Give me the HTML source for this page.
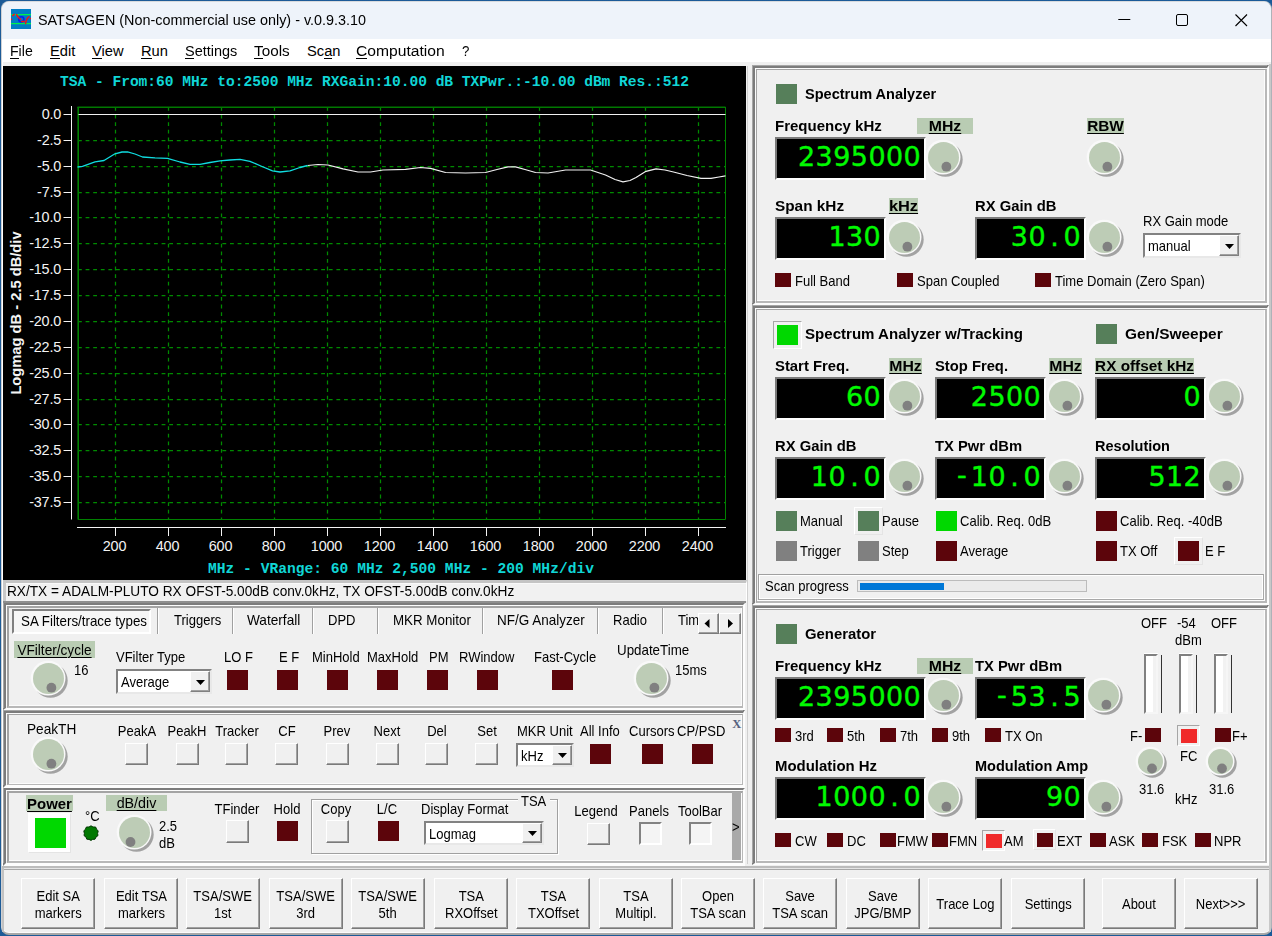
<!DOCTYPE html>
<html lang="en"><head><meta charset="utf-8"><title>SATSAGEN</title>
<style>
*{box-sizing:content-box;margin:0;padding:0}
html,body{width:1272px;height:936px;overflow:hidden;background:#1d5b97}
body{position:relative;font-family:"Liberation Sans",sans-serif;color:#000;font-size:13px}
.r,.t,.pnl,.disp,.lfr,.cmb,.btn,.stat,.sp,.pb,.mtr,.tabsel,.grp,.cb,.bbar,.desk,.win,.titlebar{position:absolute}
.t{white-space:nowrap;line-height:1;filter:grayscale(1)}
.ttl,.mn,.bx{filter:none}
.b{font-weight:bold}
.u{text-decoration:underline;text-underline-offset:1.5px;text-decoration-thickness:1px}
.mn u{text-underline-offset:2px;text-decoration-thickness:1px}
.desk{left:0;top:0;width:1272px;height:936px;background:linear-gradient(90deg,#1d5b97,#1a5a98)}
.win{left:1px;top:1px;width:1269px;height:931px;border:1px solid #d0d2d6;border-width:1px 1px 2px 1px;border-color:#d8dadd #aeb2b8 #a8a8a8 #cfd1d4;border-radius:8px;background:#f0f0f0;box-shadow:inset 1px 0 0 #fff,inset 0 -1px 0 #fbfbfb}
.titlebar{left:2px;top:2px;width:1269px;height:37px;background:#eef3fa;border-radius:7px 7px 0 0}
.pnl{border:2px solid;border-color:#868686 #fff #fff #868686}
.pnl i,.pnl b{position:absolute;left:0;top:0;right:2px;bottom:2px;border:1px solid #fff}
.pnl b{left:1px;top:1px;right:0;bottom:0;border-width:1px 2px 2px 1px;border-color:#a6a6a6 #b6b6b6 #b6b6b6 #a6a6a6}
.disp{background:#000;border:2px solid;border-color:#7a7a7a #fff #fff #7a7a7a;overflow:hidden}
.disp svg{position:absolute;left:0;top:0}
.dg{font:25.7px "DejaVu Sans","Liberation Sans",sans-serif;fill:#00fa00;stroke:#00fa00;stroke-width:0.35px}
.lfr{border:1px solid;border-color:#fff #e4e4e4 #e4e4e4 #fff}
.lfr.sunk{border-color:#a6a6a6 #fff #fff #a6a6a6}
.cmb{background:#fff;border:2px solid;border-color:#828282 #e8e8e8 #e8e8e8 #828282;}
.cmb span{filter:grayscale(1);position:absolute;left:3px;top:2px;font-size:14.5px;line-height:18px;white-space:nowrap;transform:scaleX(.897);transform-origin:0 0}
.cbtn{position:absolute;right:0;top:0;bottom:0;width:18px;background:#f0f0f0;border:1px solid;border-color:#fff #808080 #808080 #fff;box-shadow:inset -1px -1px 0 #a0a0a0}
.cbtn svg{position:absolute;left:4.5px;top:50%;margin-top:-2px}
.btn{background:#f0f0f0;border:1px solid;border-color:#fff #7a7a7a #7a7a7a #fff;box-shadow:inset -1px -1px 0 #a0a0a0;display:flex;align-items:center;justify-content:center;text-align:center;line-height:17px}
.btn span{display:block;filter:grayscale(1);transform:scaleX(.897);white-space:nowrap;position:relative;top:1.2px}
.stat{background:#f1f1f1;border-style:solid;border-width:3px 1px 0 3px;border-color:#c4c4c4 #fff #fff #c8c8c8;box-shadow:inset 0 1px 0 #f8f8f8}
.sp{border:1px solid;border-color:#a0a0a0 #a8a8a8 #a8a8a8 #a0a0a0;box-shadow:inset 1px 1px 0 #fff,inset -1px -1px 0 #fff}
.pb{background:#ebebeb;border:1px solid #bcbcbc}
.pb div{position:absolute;left:1.5px;top:2px;height:7px;background:#0078d7}
.mtr{background:linear-gradient(90deg,#fff 0,#fff 75%,#f2f2f2 75%);border:2px solid;border-color:#808080 #f6f6f6 #f6f6f6 #808080;box-shadow:0 -1px 0 #fff}
.tabsel{background:#f6f6f6;border:2px solid;border-color:#808080 #fff #fff #808080}
.grp{border:1px solid #a0a0a0;box-shadow:1px 1px 0 #fff, inset 1px 1px 0 #fff}
.cb{background:#f4f4f4;border:2px solid;border-color:#828282 #fff #fff #828282}
.bbar{border:1px solid;border-color:#a0a0a0 #fff #fff #a0a0a0;box-shadow:inset 1px 1px 0 #fff}
.ax{font:14.4px "Liberation Sans",sans-serif;fill:#f4f4f4;letter-spacing:-0.15px}
.ayt{font:bold 14.7px "Liberation Sans",sans-serif;fill:#f4f4f4}
.ct{font:bold 14.6px "Liberation Mono",monospace;fill:#10d6d6}
.bx{font-family:"Liberation Serif",serif;font-weight:bold;color:#56627e}
.ttl{letter-spacing:0}
</style></head>
<body>
<div class="desk"></div>
<div class="win"></div>
<div class="titlebar"></div>
<svg class="r" style="left:11px;top:9px" width="20" height="20" viewBox="0 0 20 20"><rect width="20" height="20" fill="#007dc5"/><rect y="5" width="20" height="1.2" fill="#00f24a"/><rect y="14" width="20" height="1.2" fill="#00f24a"/><circle cx="10.3" cy="10.3" r="2.6" fill="none" stroke="#0a1ef0" stroke-width="1.6"/><path d="M0.4 10.2v.3M1.8 6.6l1.4-1.2M5.6 5.6L7 8l2.6 2.2M10.6 12.6h2.6M14.6 14.4l.6-2.6 1.4-2.8 1.4-1.2M19.4 9.4v.2" fill="none" stroke="#f01616" stroke-width="1.5" stroke-linecap="round"/></svg>
<div class="t ttl" style="left:38px;top:12.30px;font-size:15px;transform:scaleX(0.959);transform-origin:0 0;">SATSAGEN (Non-commercial use only) - v.0.9.3.10</div>
<svg class="r" style="left:1100px;top:1px" width="170" height="38" viewBox="0 0 170 38"><path d="M18.3 18.5h12" stroke="#000" stroke-width="1" fill="none"/><rect x="76.5" y="13.5" width="11" height="11" rx="1.5" fill="none" stroke="#000" stroke-width="1"/><path d="M135.5 13.5l11.5 11.5M147 13.5l-11.5 11.5" stroke="#000" stroke-width="1.1" fill="none"/></svg>
<div class="r" style="left:2px;top:39px;width:1269px;height:23px;background:#ffffff;"></div>
<div class="r" style="left:1269px;top:64px;width:2px;height:868px;background:#c8c8c8;"></div>
<div class="t mn" style="left:10px;top:43.56px;font-size:14.7px;transform:scaleX(0.96);transform-origin:0 0;">File</div>
<div class="r" style="left:10.0px;top:58px;width:8.6px;height:1px;background:#000;"></div>
<div class="t mn" style="left:50px;top:43.56px;font-size:14.7px;">Edit</div>
<div class="r" style="left:50px;top:58px;width:9.8px;height:1px;background:#000;"></div>
<div class="t mn" style="left:92px;top:43.56px;font-size:14.7px;">View</div>
<div class="r" style="left:92px;top:58px;width:9.8px;height:1px;background:#000;"></div>
<div class="t mn" style="left:141px;top:43.56px;font-size:14.7px;">Run</div>
<div class="r" style="left:141px;top:58px;width:10.6px;height:1px;background:#000;"></div>
<div class="t mn" style="left:184.5px;top:43.56px;font-size:14.7px;transform:scaleX(0.985);transform-origin:0 0;">Settings</div>
<div class="r" style="left:184.5px;top:58px;width:9.6px;height:1px;background:#000;"></div>
<div class="t mn" style="left:254px;top:43.56px;font-size:14.7px;transform:scaleX(1.04);transform-origin:0 0;">Tools</div>
<div class="r" style="left:254.0px;top:58px;width:9.3px;height:1px;background:#000;"></div>
<div class="t mn" style="left:307px;top:43.56px;font-size:14.7px;">Scan</div>
<div class="r" style="left:324.1px;top:58px;width:8.2px;height:1px;background:#000;"></div>
<div class="t mn" style="left:356px;top:43.56px;font-size:14.7px;transform:scaleX(1.065);transform-origin:0 0;">Computation</div>
<div class="r" style="left:356.0px;top:58px;width:11.3px;height:1px;background:#000;"></div>
<div class="t mn" style="left:462.3px;top:43.56px;font-size:14.7px;transform:scaleX(0.9);transform-origin:0 0;">?</div>
<svg class="r" style="left:3px;top:66px" width="743" height="514" viewBox="3 66 743 514"><rect x="3" y="66" width="743" height="514" fill="#000"/><path d="M115.5 107V519.5" stroke="#008a00" stroke-width="1.25" stroke-dasharray="3.8 3.8" fill="none"/><path d="M168.5 107V519.5" stroke="#008a00" stroke-width="1.25" stroke-dasharray="3.8 3.8" fill="none"/><path d="M221.5 107V519.5" stroke="#008a00" stroke-width="1.25" stroke-dasharray="3.8 3.8" fill="none"/><path d="M274.5 107V519.5" stroke="#008a00" stroke-width="1.25" stroke-dasharray="3.8 3.8" fill="none"/><path d="M327.5 107V519.5" stroke="#008a00" stroke-width="1.25" stroke-dasharray="3.8 3.8" fill="none"/><path d="M380.5 107V519.5" stroke="#008a00" stroke-width="1.25" stroke-dasharray="3.8 3.8" fill="none"/><path d="M433.5 107V519.5" stroke="#008a00" stroke-width="1.25" stroke-dasharray="3.8 3.8" fill="none"/><path d="M486.5 107V519.5" stroke="#008a00" stroke-width="1.25" stroke-dasharray="3.8 3.8" fill="none"/><path d="M539.5 107V519.5" stroke="#008a00" stroke-width="1.25" stroke-dasharray="3.8 3.8" fill="none"/><path d="M592.5 107V519.5" stroke="#008a00" stroke-width="1.25" stroke-dasharray="3.8 3.8" fill="none"/><path d="M645.5 107V519.5" stroke="#008a00" stroke-width="1.25" stroke-dasharray="3.8 3.8" fill="none"/><path d="M698.5 107V519.5" stroke="#008a00" stroke-width="1.25" stroke-dasharray="3.8 3.8" fill="none"/><path d="M78 140.5H725.5" stroke="#008a00" stroke-width="1.25" stroke-dasharray="3.8 3.8" fill="none"/><path d="M78 166.5H725.5" stroke="#008a00" stroke-width="1.25" stroke-dasharray="3.8 3.8" fill="none"/><path d="M78 192.5H725.5" stroke="#008a00" stroke-width="1.25" stroke-dasharray="3.8 3.8" fill="none"/><path d="M78 217.5H725.5" stroke="#008a00" stroke-width="1.25" stroke-dasharray="3.8 3.8" fill="none"/><path d="M78 243.5H725.5" stroke="#008a00" stroke-width="1.25" stroke-dasharray="3.8 3.8" fill="none"/><path d="M78 269.5H725.5" stroke="#008a00" stroke-width="1.25" stroke-dasharray="3.8 3.8" fill="none"/><path d="M78 295.5H725.5" stroke="#008a00" stroke-width="1.25" stroke-dasharray="3.8 3.8" fill="none"/><path d="M78 321.5H725.5" stroke="#008a00" stroke-width="1.25" stroke-dasharray="3.8 3.8" fill="none"/><path d="M78 347.5H725.5" stroke="#008a00" stroke-width="1.25" stroke-dasharray="3.8 3.8" fill="none"/><path d="M78 373.5H725.5" stroke="#008a00" stroke-width="1.25" stroke-dasharray="3.8 3.8" fill="none"/><path d="M78 399.5H725.5" stroke="#008a00" stroke-width="1.25" stroke-dasharray="3.8 3.8" fill="none"/><path d="M78 424.5H725.5" stroke="#008a00" stroke-width="1.25" stroke-dasharray="3.8 3.8" fill="none"/><path d="M78 450.5H725.5" stroke="#008a00" stroke-width="1.25" stroke-dasharray="3.8 3.8" fill="none"/><path d="M78 476.5H725.5" stroke="#008a00" stroke-width="1.25" stroke-dasharray="3.8 3.8" fill="none"/><path d="M78 502.5H725.5" stroke="#008a00" stroke-width="1.25" stroke-dasharray="3.8 3.8" fill="none"/><path d="M78.2 519.5V107" fill="none" stroke="#008000" stroke-width="1.6"/><path d="M77.4 107.2H725.5" fill="none" stroke="#007800" stroke-width="1.6"/><path d="M725.5 107V519.5H78" fill="none" stroke="#008000" stroke-width="1"/><path d="M78.5 114.5H725.5" stroke="#f0f0f0" stroke-width="1.2" fill="none"/><path d="M71.5 106V519.5" stroke="#f4f4f4" stroke-width="1" fill="none"/><path d="M63.5 114.5H72" stroke="#f4f4f4" stroke-width="1" fill="none"/><text x="61.2" y="119.1" text-anchor="end" class="ax">0.0</text><path d="M63.5 140.5H72" stroke="#f4f4f4" stroke-width="1" fill="none"/><text x="61.2" y="145.1" text-anchor="end" class="ax">-2.5</text><path d="M63.5 166.5H72" stroke="#f4f4f4" stroke-width="1" fill="none"/><text x="61.2" y="171.1" text-anchor="end" class="ax">-5.0</text><path d="M63.5 192.5H72" stroke="#f4f4f4" stroke-width="1" fill="none"/><text x="61.2" y="197.1" text-anchor="end" class="ax">-7.5</text><path d="M63.5 217.5H72" stroke="#f4f4f4" stroke-width="1" fill="none"/><text x="61.2" y="222.1" text-anchor="end" class="ax">-10.0</text><path d="M63.5 243.5H72" stroke="#f4f4f4" stroke-width="1" fill="none"/><text x="61.2" y="248.1" text-anchor="end" class="ax">-12.5</text><path d="M63.5 269.5H72" stroke="#f4f4f4" stroke-width="1" fill="none"/><text x="61.2" y="274.1" text-anchor="end" class="ax">-15.0</text><path d="M63.5 295.5H72" stroke="#f4f4f4" stroke-width="1" fill="none"/><text x="61.2" y="300.1" text-anchor="end" class="ax">-17.5</text><path d="M63.5 321.5H72" stroke="#f4f4f4" stroke-width="1" fill="none"/><text x="61.2" y="326.1" text-anchor="end" class="ax">-20.0</text><path d="M63.5 347.5H72" stroke="#f4f4f4" stroke-width="1" fill="none"/><text x="61.2" y="352.1" text-anchor="end" class="ax">-22.5</text><path d="M63.5 373.5H72" stroke="#f4f4f4" stroke-width="1" fill="none"/><text x="61.2" y="378.1" text-anchor="end" class="ax">-25.0</text><path d="M63.5 399.5H72" stroke="#f4f4f4" stroke-width="1" fill="none"/><text x="61.2" y="404.1" text-anchor="end" class="ax">-27.5</text><path d="M63.5 424.5H72" stroke="#f4f4f4" stroke-width="1" fill="none"/><text x="61.2" y="429.1" text-anchor="end" class="ax">-30.0</text><path d="M63.5 450.5H72" stroke="#f4f4f4" stroke-width="1" fill="none"/><text x="61.2" y="455.1" text-anchor="end" class="ax">-32.5</text><path d="M63.5 476.5H72" stroke="#f4f4f4" stroke-width="1" fill="none"/><text x="61.2" y="481.1" text-anchor="end" class="ax">-35.0</text><path d="M63.5 502.5H72" stroke="#f4f4f4" stroke-width="1" fill="none"/><text x="61.2" y="507.1" text-anchor="end" class="ax">-37.5</text><path d="M77 527.5H726" stroke="#f4f4f4" stroke-width="1" fill="none"/><path d="M115.5 527V536" stroke="#f4f4f4" stroke-width="1" fill="none"/><text x="114.5" y="551" text-anchor="middle" class="ax">200</text><path d="M168.5 527V536" stroke="#f4f4f4" stroke-width="1" fill="none"/><text x="167.5" y="551" text-anchor="middle" class="ax">400</text><path d="M221.5 527V536" stroke="#f4f4f4" stroke-width="1" fill="none"/><text x="220.5" y="551" text-anchor="middle" class="ax">600</text><path d="M274.5 527V536" stroke="#f4f4f4" stroke-width="1" fill="none"/><text x="273.5" y="551" text-anchor="middle" class="ax">800</text><path d="M327.5 527V536" stroke="#f4f4f4" stroke-width="1" fill="none"/><text x="326.5" y="551" text-anchor="middle" class="ax">1000</text><path d="M380.5 527V536" stroke="#f4f4f4" stroke-width="1" fill="none"/><text x="379.5" y="551" text-anchor="middle" class="ax">1200</text><path d="M433.5 527V536" stroke="#f4f4f4" stroke-width="1" fill="none"/><text x="432.5" y="551" text-anchor="middle" class="ax">1400</text><path d="M486.5 527V536" stroke="#f4f4f4" stroke-width="1" fill="none"/><text x="485.5" y="551" text-anchor="middle" class="ax">1600</text><path d="M539.5 527V536" stroke="#f4f4f4" stroke-width="1" fill="none"/><text x="538.5" y="551" text-anchor="middle" class="ax">1800</text><path d="M592.5 527V536" stroke="#f4f4f4" stroke-width="1" fill="none"/><text x="591.5" y="551" text-anchor="middle" class="ax">2000</text><path d="M645.5 527V536" stroke="#f4f4f4" stroke-width="1" fill="none"/><text x="644.5" y="551" text-anchor="middle" class="ax">2200</text><path d="M698.5 527V536" stroke="#f4f4f4" stroke-width="1" fill="none"/><text x="697.5" y="551" text-anchor="middle" class="ax">2400</text><text transform="translate(20.5 313) rotate(-90)" text-anchor="middle" class="ayt">Logmag dB - 2.5 dB/div</text><text x="60" y="86.1" class="ct" textLength="629">TSA - From:60 MHz to:2500 MHz RXGain:10.00 dB TXPwr.:-10.00 dBm Res.:512</text><text x="208" y="572.5" class="ct" textLength="386">MHz - VRange: 60 MHz 2,500 MHz - 200 MHz/div</text><polyline points="307.5,165.5 318.0,164.5 328.0,165.0 343.0,168.8 358.0,172.0 370.5,172.0 383.0,170.0 405.5,169.3 420.5,167.5 430.5,168.3 445.5,172.5 465.5,173.0 485.5,172.5 497.0,169.5 508.0,166.8 515.5,166.8 525.0,169.5 535.5,172.5 548.0,173.0 565.5,170.0 590.5,170.0 605.5,175.0 615.0,179.5 623.0,181.8 630.0,180.5 636.0,177.5 646.0,171.3 656.0,168.8 665.0,170.0 673.5,172.0 687.0,175.5 701.0,178.3 711.0,178.3 719.0,177.0 725.5,175.8" fill="none" stroke="#f0f0f0" stroke-width="1.2" stroke-linejoin="round"/><polyline points="77.5,167.0 82.5,166.3 95.0,161.8 104.0,160.5 115.0,153.8 122.0,152.0 127.5,151.8 135.0,154.0 142.5,157.0 155.0,157.8 167.5,158.3 180.0,162.0 190.0,164.3 200.0,164.3 210.0,162.5 220.0,160.8 230.0,160.0 240.0,159.3 250.0,161.3 262.0,166.5 272.5,170.8 280.0,172.0 290.0,170.8 300.0,167.5 307.5,165.5" fill="none" stroke="#10dce0" stroke-width="1.3" stroke-linejoin="round"/></svg>
<div class="stat" style="left:3px;top:580px;width:740px;height:18px"></div>
<div class="t" style="left:6.6px;top:583.22px;font-size:15.1px;transform:scaleX(0.905);transform-origin:0 0;">RX/TX = ADALM-PLUTO RX OFST-5.00dB conv.0kHz, TX OFST-5.00dB conv.0kHz</div>
<div class="r" style="left:747px;top:66px;width:1px;height:798px;background:#d0d0d0;"></div>
<div class="r" style="left:752px;top:65px;width:512px;height:235px;border-style:solid;border-width:3px 2px 2px 3px;border-color:#7c7c7c #fdfdfd #fdfdfd #7c7c7c"></div>
<div class="r" style="left:752px;top:65px;width:1px;height:238px;background:#a6a6a6;"></div>
<div class="r" style="left:752px;top:65px;width:515px;height:1px;background:#a6a6a6;"></div>
<div class="r" style="left:755px;top:68px;width:508px;height:231px;border:1px solid #fcfcfc"></div>
<div class="r" style="left:756px;top:69px;width:508px;height:231px;border-style:solid;border-width:1px 2px 2px 1px;border-color:#a4a4a4 #b8b8b8 #b8b8b8 #a4a4a4"></div>
<div class="r" style="left:776px;top:84px;width:21px;height:20px;background:#567f5a;"></div>
<div class="t b" style="left:805px;top:87.23px;font-size:14.5px;transform:scaleX(1.003);transform-origin:0 0;">Spectrum Analyzer</div>
<div class="t b" style="left:775px;top:119.23px;font-size:14.5px;transform:scaleX(1.035);transform-origin:0 0;">Frequency kHz</div>
<div class="r" style="left:917px;top:118px;width:56px;height:16px;background:#b9ccb3;"></div>
<div class="t b u" style="left:917px;top:119.03px;font-size:14.5px;width:56px;text-align:center;transform:scaleX(1.09);transform-origin:50% 0;">MHz</div>
<div class="disp" style="left:775px;top:137px;width:147px;height:39px"><svg width="147" height="39" viewBox="0 0 147 39"><text class="dg" transform="scale(1.05 1)" text-anchor="middle" x="28.19 44.95 61.71 78.48 95.24 112.00 128.76" y="26.9 26.9 26.9 26.9 26.9 26.9 26.9">2395000</text></svg></div>
<svg class="r" style="left:925.0px;top:138.5px" width="40.0" height="40.0" viewBox="0 0 40.0 40.0"><circle cx="20.5" cy="20.5" r="17.2" fill="#a2a2a2"/><circle cx="18.1" cy="18.1" r="17.4" fill="#f9f9f9"/><circle cx="18.5" cy="18.5" r="15.5" fill="#bdccb6"/><circle cx="21.4" cy="27.7" r="4.9" fill="#808080"/></svg>
<div class="r" style="left:1087px;top:118px;width:37px;height:16px;background:#b9ccb3;"></div>
<div class="t b u" style="left:1087px;top:119.03px;font-size:14.5px;width:37px;text-align:center;transform:scaleX(1.06);transform-origin:50% 0;">RBW</div>
<svg class="r" style="left:1086.0px;top:138.5px" width="40.0" height="40.0" viewBox="0 0 40.0 40.0"><circle cx="20.5" cy="20.5" r="17.2" fill="#a2a2a2"/><circle cx="18.1" cy="18.1" r="17.4" fill="#f9f9f9"/><circle cx="18.5" cy="18.5" r="15.5" fill="#bdccb6"/><circle cx="21.4" cy="27.7" r="4.9" fill="#808080"/></svg>
<div class="t b" style="left:775px;top:199.23px;font-size:14.5px;transform:scaleX(1.058);transform-origin:0 0;">Span kHz</div>
<div class="r" style="left:889px;top:198px;width:29px;height:16px;background:#b9ccb3;"></div>
<div class="t b u" style="left:889px;top:199.03px;font-size:14.5px;width:29px;text-align:center;transform:scaleX(1.13);transform-origin:50% 0;">kHz</div>
<div class="disp" style="left:775px;top:217px;width:107px;height:39px"><svg width="107" height="39" viewBox="0 0 107 39"><text class="dg" transform="scale(1.05 1)" text-anchor="middle" x="57.14 73.90 90.67" y="26.9 26.9 26.9">130</text></svg></div>
<svg class="r" style="left:886.0px;top:218.5px" width="40.0" height="40.0" viewBox="0 0 40.0 40.0"><circle cx="20.5" cy="20.5" r="17.2" fill="#a2a2a2"/><circle cx="18.1" cy="18.1" r="17.4" fill="#f9f9f9"/><circle cx="18.5" cy="18.5" r="15.5" fill="#bdccb6"/><circle cx="21.4" cy="27.7" r="4.9" fill="#808080"/></svg>
<div class="t b" style="left:975px;top:199.23px;font-size:14.5px;transform:scaleX(1.021);transform-origin:0 0;">RX Gain dB</div>
<div class="disp" style="left:975px;top:217px;width:107px;height:39px"><svg width="107" height="39" viewBox="0 0 107 39"><text class="dg" transform="scale(1.05 1)" text-anchor="middle" x="40.38 57.14 73.90 90.67" y="26.9 26.9 26.9 26.9">30.0</text></svg></div>
<svg class="r" style="left:1086.0px;top:218.5px" width="40.0" height="40.0" viewBox="0 0 40.0 40.0"><circle cx="20.5" cy="20.5" r="17.2" fill="#a2a2a2"/><circle cx="18.1" cy="18.1" r="17.4" fill="#f9f9f9"/><circle cx="18.5" cy="18.5" r="15.5" fill="#bdccb6"/><circle cx="21.4" cy="27.7" r="4.9" fill="#808080"/></svg>
<div class="t" style="left:1143px;top:214.23px;font-size:14.5px;transform:scaleX(0.897);transform-origin:0 0;">RX Gain mode</div>
<div class="cmb" style="left:1143px;top:233px;width:94px;height:21px"><span>manual</span><div class="cbtn"><svg width="9" height="5" viewBox="0 0 9 5"><path d="M0 0h9L4.5 5z" fill="#000"/></svg></div></div>
<div class="r" style="left:775px;top:273px;width:16px;height:14px;background:#5c050b;"></div>
<div class="t" style="left:795px;top:274.23px;font-size:14.5px;transform:scaleX(0.897);transform-origin:0 0;">Full Band</div>
<div class="r" style="left:897px;top:273px;width:16px;height:14px;background:#5c050b;"></div>
<div class="t" style="left:917px;top:274.23px;font-size:14.5px;transform:scaleX(0.897);transform-origin:0 0;">Span Coupled</div>
<div class="r" style="left:1035px;top:273px;width:16px;height:14px;background:#5c050b;"></div>
<div class="t" style="left:1055px;top:274.23px;font-size:14.5px;transform:scaleX(0.897);transform-origin:0 0;">Time Domain (Zero Span)</div>
<div class="r" style="left:752px;top:305px;width:512px;height:295px;border-style:solid;border-width:3px 2px 2px 3px;border-color:#7c7c7c #fdfdfd #fdfdfd #7c7c7c"></div>
<div class="r" style="left:752px;top:305px;width:1px;height:298px;background:#a6a6a6;"></div>
<div class="r" style="left:752px;top:305px;width:515px;height:1px;background:#a6a6a6;"></div>
<div class="r" style="left:755px;top:308px;width:508px;height:291px;border:1px solid #fcfcfc"></div>
<div class="r" style="left:756px;top:309px;width:508px;height:291px;border-style:solid;border-width:1px 2px 2px 1px;border-color:#a4a4a4 #b8b8b8 #b8b8b8 #a4a4a4"></div>
<div class="lfr sunk" style="left:773px;top:321px;width:27px;height:26px"></div>
<div class="r" style="left:777px;top:325px;width:21px;height:20px;background:#00d800;"></div>
<div class="t b" style="left:805px;top:327.23px;font-size:14.5px;transform:scaleX(1.039);transform-origin:0 0;">Spectrum Analyzer w/Tracking</div>
<div class="r" style="left:1096px;top:324px;width:21px;height:20px;background:#567f5a;"></div>
<div class="t b" style="left:1125px;top:327.23px;font-size:14.5px;transform:scaleX(1.063);transform-origin:0 0;">Gen/Sweeper</div>
<div class="t b" style="left:775px;top:359.23px;font-size:14.5px;transform:scaleX(1.024);transform-origin:0 0;">Start Freq.</div>
<div class="r" style="left:889px;top:358px;width:33px;height:16px;background:#b9ccb3;"></div>
<div class="t b u" style="left:889px;top:359.03px;font-size:14.5px;width:33px;text-align:center;transform:scaleX(1.09);transform-origin:50% 0;">MHz</div>
<div class="disp" style="left:775px;top:377px;width:107px;height:39px"><svg width="107" height="39" viewBox="0 0 107 39"><text class="dg" transform="scale(1.05 1)" text-anchor="middle" x="73.90 90.67" y="26.9 26.9">60</text></svg></div>
<svg class="r" style="left:886.0px;top:378.1px" width="40.0" height="40.0" viewBox="0 0 40.0 40.0"><circle cx="20.5" cy="20.5" r="17.2" fill="#a2a2a2"/><circle cx="18.1" cy="18.1" r="17.4" fill="#f9f9f9"/><circle cx="18.5" cy="18.5" r="15.5" fill="#bdccb6"/><circle cx="21.4" cy="27.7" r="4.9" fill="#808080"/></svg>
<div class="t b" style="left:935px;top:359.23px;font-size:14.5px;transform:scaleX(1.018);transform-origin:0 0;">Stop Freq.</div>
<div class="r" style="left:1049px;top:358px;width:33px;height:16px;background:#b9ccb3;"></div>
<div class="t b u" style="left:1049px;top:359.03px;font-size:14.5px;width:33px;text-align:center;transform:scaleX(1.09);transform-origin:50% 0;">MHz</div>
<div class="disp" style="left:935px;top:377px;width:107px;height:39px"><svg width="107" height="39" viewBox="0 0 107 39"><text class="dg" transform="scale(1.05 1)" text-anchor="middle" x="40.38 57.14 73.90 90.67" y="26.9 26.9 26.9 26.9">2500</text></svg></div>
<svg class="r" style="left:1046.0px;top:378.1px" width="40.0" height="40.0" viewBox="0 0 40.0 40.0"><circle cx="20.5" cy="20.5" r="17.2" fill="#a2a2a2"/><circle cx="18.1" cy="18.1" r="17.4" fill="#f9f9f9"/><circle cx="18.5" cy="18.5" r="15.5" fill="#bdccb6"/><circle cx="21.4" cy="27.7" r="4.9" fill="#808080"/></svg>
<div class="disp" style="left:1095px;top:377px;width:107px;height:39px"><svg width="107" height="39" viewBox="0 0 107 39"><text class="dg" transform="scale(1.05 1)" text-anchor="middle" x="90.67" y="26.9">0</text></svg></div>
<svg class="r" style="left:1206.0px;top:378.1px" width="40.0" height="40.0" viewBox="0 0 40.0 40.0"><circle cx="20.5" cy="20.5" r="17.2" fill="#a2a2a2"/><circle cx="18.1" cy="18.1" r="17.4" fill="#f9f9f9"/><circle cx="18.5" cy="18.5" r="15.5" fill="#bdccb6"/><circle cx="21.4" cy="27.7" r="4.9" fill="#808080"/></svg>
<div class="r" style="left:1095px;top:358px;width:99px;height:16px;background:#b9ccb3;"></div>
<div class="t b u" style="left:1095px;top:359.03px;font-size:14.5px;width:99px;text-align:center;transform:scaleX(1.058);transform-origin:50% 0;">RX offset kHz</div>
<div class="t b" style="left:775px;top:439.23px;font-size:14.5px;transform:scaleX(1.021);transform-origin:0 0;">RX Gain dB</div>
<div class="disp" style="left:775px;top:457px;width:107px;height:39px"><svg width="107" height="39" viewBox="0 0 107 39"><text class="dg" transform="scale(1.05 1)" text-anchor="middle" x="40.38 57.14 73.90 90.67" y="26.9 26.9 26.9 26.9">10.0</text></svg></div>
<svg class="r" style="left:886.0px;top:458.3px" width="40.0" height="40.0" viewBox="0 0 40.0 40.0"><circle cx="20.5" cy="20.5" r="17.2" fill="#a2a2a2"/><circle cx="18.1" cy="18.1" r="17.4" fill="#f9f9f9"/><circle cx="18.5" cy="18.5" r="15.5" fill="#bdccb6"/><circle cx="21.4" cy="27.7" r="4.9" fill="#808080"/></svg>
<div class="t b" style="left:935px;top:439.23px;font-size:14.5px;transform:scaleX(1.019);transform-origin:0 0;">TX Pwr dBm</div>
<div class="disp" style="left:935px;top:457px;width:107px;height:39px"><svg width="107" height="39" viewBox="0 0 107 39"><text class="dg" transform="scale(1.05 1)" text-anchor="middle" x="23.62 40.38 57.14 73.90 90.67" y="25.2 26.9 26.9 26.9 26.9">-10.0</text></svg></div>
<svg class="r" style="left:1046.0px;top:458.3px" width="40.0" height="40.0" viewBox="0 0 40.0 40.0"><circle cx="20.5" cy="20.5" r="17.2" fill="#a2a2a2"/><circle cx="18.1" cy="18.1" r="17.4" fill="#f9f9f9"/><circle cx="18.5" cy="18.5" r="15.5" fill="#bdccb6"/><circle cx="21.4" cy="27.7" r="4.9" fill="#808080"/></svg>
<div class="t b" style="left:1095px;top:439.23px;font-size:14.5px;transform:scaleX(1.001);transform-origin:0 0;">Resolution</div>
<div class="disp" style="left:1095px;top:457px;width:107px;height:39px"><svg width="107" height="39" viewBox="0 0 107 39"><text class="dg" transform="scale(1.05 1)" text-anchor="middle" x="57.14 73.90 90.67" y="26.9 26.9 26.9">512</text></svg></div>
<svg class="r" style="left:1206.0px;top:458.3px" width="40.0" height="40.0" viewBox="0 0 40.0 40.0"><circle cx="20.5" cy="20.5" r="17.2" fill="#a2a2a2"/><circle cx="18.1" cy="18.1" r="17.4" fill="#f9f9f9"/><circle cx="18.5" cy="18.5" r="15.5" fill="#bdccb6"/><circle cx="21.4" cy="27.7" r="4.9" fill="#808080"/></svg>
<div class="r" style="left:776px;top:511px;width:21px;height:20px;background:#567f5a;"></div>
<div class="t" style="left:800px;top:514.23px;font-size:14.5px;transform:scaleX(0.897);transform-origin:0 0;">Manual</div>
<div class="lfr" style="left:854px;top:507px;width:27px;height:26px"></div>
<div class="r" style="left:858px;top:511px;width:21px;height:20px;background:#567f5a;"></div>
<div class="t" style="left:882px;top:514.23px;font-size:14.5px;transform:scaleX(0.897);transform-origin:0 0;">Pause</div>
<div class="r" style="left:936px;top:511px;width:21px;height:20px;background:#00d800;"></div>
<div class="t" style="left:960px;top:514.23px;font-size:14.5px;transform:scaleX(0.897);transform-origin:0 0;">Calib. Req. 0dB</div>
<div class="r" style="left:1096px;top:511px;width:21px;height:20px;background:#5c050b;"></div>
<div class="t" style="left:1120px;top:514.23px;font-size:14.5px;transform:scaleX(0.897);transform-origin:0 0;">Calib. Req. -40dB</div>
<div class="r" style="left:776px;top:541px;width:21px;height:20px;background:#808080;"></div>
<div class="t" style="left:800px;top:544.23px;font-size:14.5px;transform:scaleX(0.897);transform-origin:0 0;">Trigger</div>
<div class="r" style="left:858px;top:541px;width:21px;height:20px;background:#808080;"></div>
<div class="t" style="left:882px;top:544.23px;font-size:14.5px;transform:scaleX(0.897);transform-origin:0 0;">Step</div>
<div class="r" style="left:936px;top:541px;width:21px;height:20px;background:#5c050b;"></div>
<div class="t" style="left:960px;top:544.23px;font-size:14.5px;transform:scaleX(0.897);transform-origin:0 0;">Average</div>
<div class="r" style="left:1096px;top:541px;width:21px;height:20px;background:#5c050b;"></div>
<div class="t" style="left:1120px;top:544.23px;font-size:14.5px;transform:scaleX(0.897);transform-origin:0 0;">TX Off</div>
<div class="lfr" style="left:1174px;top:537px;width:27px;height:26px"></div>
<div class="r" style="left:1178px;top:541px;width:21px;height:20px;background:#5c050b;"></div>
<div class="t" style="left:1205px;top:544.23px;font-size:14.5px;transform:scaleX(0.897);transform-origin:0 0;">E F</div>
<div class="sp" style="left:758px;top:574px;width:504px;height:24px"></div>
<div class="t" style="left:765px;top:579.23px;font-size:14.5px;transform:scaleX(0.897);transform-origin:0 0;">Scan progress</div>
<div class="pb" style="left:857px;top:580px;width:228px;height:10px"><div style="width:84px"></div></div>
<div class="r" style="left:752px;top:605px;width:512px;height:255px;border-style:solid;border-width:3px 2px 2px 3px;border-color:#7c7c7c #fdfdfd #fdfdfd #7c7c7c"></div>
<div class="r" style="left:752px;top:605px;width:1px;height:258px;background:#a6a6a6;"></div>
<div class="r" style="left:752px;top:605px;width:515px;height:1px;background:#a6a6a6;"></div>
<div class="r" style="left:755px;top:608px;width:508px;height:251px;border:1px solid #fcfcfc"></div>
<div class="r" style="left:756px;top:609px;width:508px;height:251px;border-style:solid;border-width:1px 2px 2px 1px;border-color:#a4a4a4 #b8b8b8 #b8b8b8 #a4a4a4"></div>
<div class="r" style="left:776px;top:624px;width:21px;height:20px;background:#567f5a;"></div>
<div class="t b" style="left:805px;top:627.23px;font-size:14.5px;transform:scaleX(1.025);transform-origin:0 0;">Generator</div>
<div class="t b" style="left:775px;top:659.23px;font-size:14.5px;transform:scaleX(1.035);transform-origin:0 0;">Frequency kHz</div>
<div class="r" style="left:917px;top:658px;width:56px;height:16px;background:#b9ccb3;"></div>
<div class="t b u" style="left:917px;top:659.03px;font-size:14.5px;width:56px;text-align:center;transform:scaleX(1.09);transform-origin:50% 0;">MHz</div>
<div class="disp" style="left:775px;top:677px;width:147px;height:39px"><svg width="147" height="39" viewBox="0 0 147 39"><text class="dg" transform="scale(1.05 1)" text-anchor="middle" x="28.19 44.95 61.71 78.48 95.24 112.00 128.76" y="26.9 26.9 26.9 26.9 26.9 26.9 26.9">2395000</text></svg></div>
<svg class="r" style="left:925.0px;top:677.1px" width="40.0" height="40.0" viewBox="0 0 40.0 40.0"><circle cx="20.5" cy="20.5" r="17.2" fill="#a2a2a2"/><circle cx="18.1" cy="18.1" r="17.4" fill="#f9f9f9"/><circle cx="18.5" cy="18.5" r="15.5" fill="#bdccb6"/><circle cx="21.4" cy="27.7" r="4.9" fill="#808080"/></svg>
<div class="t b" style="left:975px;top:659.23px;font-size:14.5px;transform:scaleX(1.019);transform-origin:0 0;">TX Pwr dBm</div>
<div class="disp" style="left:975px;top:677px;width:107px;height:39px"><svg width="107" height="39" viewBox="0 0 107 39"><text class="dg" transform="scale(1.05 1)" text-anchor="middle" x="23.62 40.38 57.14 73.90 90.67" y="25.2 26.9 26.9 26.9 26.9">-53.5</text></svg></div>
<svg class="r" style="left:1085.0px;top:677.1px" width="40.0" height="40.0" viewBox="0 0 40.0 40.0"><circle cx="20.5" cy="20.5" r="17.2" fill="#a2a2a2"/><circle cx="18.1" cy="18.1" r="17.4" fill="#f9f9f9"/><circle cx="18.5" cy="18.5" r="15.5" fill="#bdccb6"/><circle cx="21.4" cy="27.7" r="4.9" fill="#808080"/></svg>
<div class="r" style="left:775px;top:728px;width:16px;height:14px;background:#5c050b;"></div>
<div class="t" style="left:795px;top:729.23px;font-size:14.5px;transform:scaleX(0.897);transform-origin:0 0;">3rd</div>
<div class="r" style="left:827px;top:728px;width:16px;height:14px;background:#5c050b;"></div>
<div class="t" style="left:847px;top:729.23px;font-size:14.5px;transform:scaleX(0.897);transform-origin:0 0;">5th</div>
<div class="r" style="left:880px;top:728px;width:16px;height:14px;background:#5c050b;"></div>
<div class="t" style="left:900px;top:729.23px;font-size:14.5px;transform:scaleX(0.897);transform-origin:0 0;">7th</div>
<div class="r" style="left:932px;top:728px;width:16px;height:14px;background:#5c050b;"></div>
<div class="t" style="left:952px;top:729.23px;font-size:14.5px;transform:scaleX(0.897);transform-origin:0 0;">9th</div>
<div class="r" style="left:985px;top:728px;width:16px;height:14px;background:#5c050b;"></div>
<div class="t" style="left:1005px;top:729.23px;font-size:14.5px;transform:scaleX(0.897);transform-origin:0 0;">TX On</div>
<div class="t b" style="left:775px;top:759.23px;font-size:14.5px;transform:scaleX(1.03);transform-origin:0 0;">Modulation Hz</div>
<div class="disp" style="left:775px;top:777px;width:147px;height:39px"><svg width="147" height="39" viewBox="0 0 147 39"><text class="dg" transform="scale(1.05 1)" text-anchor="middle" x="44.95 61.71 78.48 95.24 112.00 128.76" y="26.9 26.9 26.9 26.9 26.9 26.9">1000.0</text></svg></div>
<svg class="r" style="left:925.0px;top:778.5px" width="40.0" height="40.0" viewBox="0 0 40.0 40.0"><circle cx="20.5" cy="20.5" r="17.2" fill="#a2a2a2"/><circle cx="18.1" cy="18.1" r="17.4" fill="#f9f9f9"/><circle cx="18.5" cy="18.5" r="15.5" fill="#bdccb6"/><circle cx="21.4" cy="27.7" r="4.9" fill="#808080"/></svg>
<div class="t b" style="left:975px;top:759.23px;font-size:14.5px;">Modulation Amp</div>
<div class="disp" style="left:975px;top:777px;width:107px;height:39px"><svg width="107" height="39" viewBox="0 0 107 39"><text class="dg" transform="scale(1.05 1)" text-anchor="middle" x="73.90 90.67" y="26.9 26.9">90</text></svg></div>
<svg class="r" style="left:1085.0px;top:778.5px" width="40.0" height="40.0" viewBox="0 0 40.0 40.0"><circle cx="20.5" cy="20.5" r="17.2" fill="#a2a2a2"/><circle cx="18.1" cy="18.1" r="17.4" fill="#f9f9f9"/><circle cx="18.5" cy="18.5" r="15.5" fill="#bdccb6"/><circle cx="21.4" cy="27.7" r="4.9" fill="#808080"/></svg>
<div class="r" style="left:775px;top:833px;width:16px;height:14px;background:#5c050b;"></div>
<div class="t" style="left:795px;top:834.23px;font-size:14.5px;transform:scaleX(0.897);transform-origin:0 0;">CW</div>
<div class="r" style="left:827px;top:833px;width:16px;height:14px;background:#5c050b;"></div>
<div class="t" style="left:847px;top:834.23px;font-size:14.5px;transform:scaleX(0.897);transform-origin:0 0;">DC</div>
<div class="r" style="left:880px;top:833px;width:16px;height:14px;background:#5c050b;"></div>
<div class="t" style="left:897px;top:834.23px;font-size:14.5px;transform:scaleX(0.897);transform-origin:0 0;">FMW</div>
<div class="r" style="left:932px;top:833px;width:16px;height:14px;background:#5c050b;"></div>
<div class="t" style="left:949px;top:834.23px;font-size:14.5px;transform:scaleX(0.897);transform-origin:0 0;">FMN</div>
<div class="lfr" style="left:1033px;top:829px;width:21px;height:19px"></div>
<div class="r" style="left:1037px;top:833px;width:16px;height:14px;background:#5c050b;"></div>
<div class="t" style="left:1057px;top:834.23px;font-size:14.5px;transform:scaleX(0.897);transform-origin:0 0;">EXT</div>
<div class="r" style="left:1090px;top:833px;width:16px;height:14px;background:#5c050b;"></div>
<div class="t" style="left:1109px;top:834.23px;font-size:14.5px;transform:scaleX(0.897);transform-origin:0 0;">ASK</div>
<div class="r" style="left:1142px;top:833px;width:16px;height:14px;background:#5c050b;"></div>
<div class="t" style="left:1162px;top:834.23px;font-size:14.5px;transform:scaleX(0.897);transform-origin:0 0;">FSK</div>
<div class="r" style="left:1195px;top:833px;width:16px;height:14px;background:#5c050b;"></div>
<div class="t" style="left:1214px;top:834.23px;font-size:14.5px;transform:scaleX(0.897);transform-origin:0 0;">NPR</div>
<div class="lfr sunk" style="left:982px;top:830px;width:21px;height:19px"></div>
<div class="r" style="left:986px;top:834px;width:16px;height:14px;background:#f02a2a;"></div>
<div class="t" style="left:1004px;top:834.23px;font-size:14.5px;transform:scaleX(0.897);transform-origin:0 0;">AM</div>
<div class="t" style="left:1141px;top:616.23px;font-size:14.5px;transform:scaleX(0.897);transform-origin:0 0;">OFF</div>
<div class="t" style="left:1177px;top:616.23px;font-size:14.5px;transform:scaleX(0.897);transform-origin:0 0;">-54</div>
<div class="t" style="left:1211px;top:616.23px;font-size:14.5px;transform:scaleX(0.897);transform-origin:0 0;">OFF</div>
<div class="t" style="left:1175px;top:633.23px;font-size:14.5px;transform:scaleX(0.897);transform-origin:0 0;">dBm</div>
<div class="mtr" style="left:1144px;top:654px;width:10px;height:56px"></div>
<div class="r" style="left:1161px;top:655px;width:1.3px;height:58px;background:#333;"></div>
<div class="mtr" style="left:1179px;top:654px;width:10px;height:56px"></div>
<div class="r" style="left:1196px;top:655px;width:1.3px;height:58px;background:#333;"></div>
<div class="mtr" style="left:1214px;top:654px;width:10px;height:56px"></div>
<div class="r" style="left:1231px;top:655px;width:1.3px;height:58px;background:#333;"></div>
<div class="t" style="left:1130px;top:729.23px;font-size:14.5px;transform:scaleX(0.897);transform-origin:0 0;">F-</div>
<div class="r" style="left:1145px;top:728px;width:16px;height:14px;background:#5c050b;"></div>
<div class="lfr sunk" style="left:1177px;top:725px;width:21px;height:19px"></div>
<div class="r" style="left:1181px;top:729px;width:16px;height:14px;background:#f02a2a;"></div>
<div class="r" style="left:1215px;top:728px;width:16px;height:14px;background:#5c050b;"></div>
<div class="t" style="left:1232px;top:729.23px;font-size:14.5px;transform:scaleX(0.897);transform-origin:0 0;">F+</div>
<svg class="r" style="left:1134.5px;top:745.5px" width="34.0" height="34.0" viewBox="0 0 34.0 34.0"><circle cx="17.5" cy="17.5" r="14.2" fill="#a2a2a2"/><circle cx="15.1" cy="15.1" r="14.4" fill="#f9f9f9"/><circle cx="15.5" cy="15.5" r="12.5" fill="#bdccb6"/><circle cx="17.0" cy="22.5" r="4.9" fill="#808080"/></svg>
<svg class="r" style="left:1204.5px;top:745.5px" width="34.0" height="34.0" viewBox="0 0 34.0 34.0"><circle cx="17.5" cy="17.5" r="14.2" fill="#a2a2a2"/><circle cx="15.1" cy="15.1" r="14.4" fill="#f9f9f9"/><circle cx="15.5" cy="15.5" r="12.5" fill="#bdccb6"/><circle cx="17.0" cy="22.5" r="4.9" fill="#808080"/></svg>
<div class="t" style="left:1180px;top:749.23px;font-size:14.5px;transform:scaleX(0.897);transform-origin:0 0;">FC</div>
<div class="t" style="left:1139px;top:781.63px;font-size:14.5px;transform:scaleX(0.897);transform-origin:0 0;">31.6</div>
<div class="t" style="left:1209px;top:781.63px;font-size:14.5px;transform:scaleX(0.897);transform-origin:0 0;">31.6</div>
<div class="t" style="left:1175px;top:792.23px;font-size:14.5px;transform:scaleX(0.897);transform-origin:0 0;">kHz</div>
<div class="r" style="left:3px;top:601px;width:743px;height:2px;background:#8e8e8e;"></div>
<div class="r" style="left:3px;top:603px;width:737px;height:103px;border-style:solid;border-width:2px 2px 2px 3px;border-color:#7c7c7c #fdfdfd #fdfdfd #7c7c7c"></div>
<div class="r" style="left:3px;top:603px;width:1px;height:105px;background:#a6a6a6;"></div>
<div class="r" style="left:6px;top:605px;width:734px;height:99px;border:1px solid #fcfcfc"></div>
<div class="r" style="left:7px;top:606px;width:733px;height:98px;border-style:solid;border-width:2px 1px 2px 2px;border-color:#a4a4a4 #b8b8b8 #b8b8b8 #a4a4a4"></div>
<div class="tabsel" style="left:12px;top:609px;width:135px;height:21px"></div>
<div class="t" style="left:20.5px;top:614.23px;font-size:14.5px;transform:scaleX(0.92);transform-origin:0 0;">SA Filters/trace types</div>
<div class="t" style="left:173.5px;top:613.23px;font-size:14.5px;transform:scaleX(0.897);transform-origin:0 0;">Triggers</div>
<div class="t" style="left:247px;top:613.23px;font-size:14.5px;transform:scaleX(0.94);transform-origin:0 0;">Waterfall</div>
<div class="t" style="left:327.5px;top:613.23px;font-size:14.5px;transform:scaleX(0.897);transform-origin:0 0;">DPD</div>
<div class="t" style="left:392.5px;top:613.23px;font-size:14.5px;transform:scaleX(0.92);transform-origin:0 0;">MKR Monitor</div>
<div class="t" style="left:497px;top:613.23px;font-size:14.5px;transform:scaleX(0.93);transform-origin:0 0;">NF/G Analyzer</div>
<div class="t" style="left:612.5px;top:613.23px;font-size:14.5px;transform:scaleX(0.897);transform-origin:0 0;">Radio</div>
<div class="t" style="left:678px;top:613.23px;font-size:14.5px;transform:scaleX(0.897);transform-origin:0 0;">Tim</div>
<div class="r" style="left:157px;top:608px;width:1px;height:26px;background:#a0a0a0;"></div>
<div class="r" style="left:158px;top:608px;width:1px;height:26px;background:#ffffff;"></div>
<div class="r" style="left:232px;top:608px;width:1px;height:26px;background:#a0a0a0;"></div>
<div class="r" style="left:233px;top:608px;width:1px;height:26px;background:#ffffff;"></div>
<div class="r" style="left:312px;top:608px;width:1px;height:26px;background:#a0a0a0;"></div>
<div class="r" style="left:313px;top:608px;width:1px;height:26px;background:#ffffff;"></div>
<div class="r" style="left:377px;top:608px;width:1px;height:26px;background:#a0a0a0;"></div>
<div class="r" style="left:378px;top:608px;width:1px;height:26px;background:#ffffff;"></div>
<div class="r" style="left:482px;top:608px;width:1px;height:26px;background:#a0a0a0;"></div>
<div class="r" style="left:483px;top:608px;width:1px;height:26px;background:#ffffff;"></div>
<div class="r" style="left:597px;top:608px;width:1px;height:26px;background:#a0a0a0;"></div>
<div class="r" style="left:598px;top:608px;width:1px;height:26px;background:#ffffff;"></div>
<div class="r" style="left:662px;top:608px;width:1px;height:26px;background:#a0a0a0;"></div>
<div class="r" style="left:663px;top:608px;width:1px;height:26px;background:#ffffff;"></div>
<div class="btn" style="left:698px;top:613px;width:19px;height:19px;font-size:14.5px"></div>
<div class="btn" style="left:719px;top:613px;width:20px;height:19px;font-size:14.5px"></div>
<svg class="r" style="left:698px;top:613px" width="44" height="21" viewBox="0 0 44 21"><path d="M11.5 6v9l-5-4.5z" fill="#000"/><path d="M30 6v9l5-4.5z" fill="#000"/></svg>
<div class="r" style="left:14px;top:641px;width:81px;height:17px;background:#b9ccb3;"></div>
<div class="t u" style="left:14px;top:642.83px;font-size:14.5px;width:81px;text-align:center;transform:scaleX(0.94);transform-origin:50% 0;">VFilter/cycle</div>
<svg class="r" style="left:30.0px;top:660.0px" width="40.0" height="40.0" viewBox="0 0 40.0 40.0"><circle cx="20.5" cy="20.5" r="17.2" fill="#a2a2a2"/><circle cx="18.1" cy="18.1" r="17.4" fill="#f9f9f9"/><circle cx="18.5" cy="18.5" r="15.5" fill="#bdccb6"/><circle cx="21.4" cy="27.7" r="4.9" fill="#808080"/></svg>
<div class="t" style="left:74px;top:663.23px;font-size:14.5px;transform:scaleX(0.897);transform-origin:0 0;">16</div>
<div class="t" style="left:116px;top:650.23px;font-size:14.5px;transform:scaleX(0.897);transform-origin:0 0;">VFilter Type</div>
<div class="cmb" style="left:116px;top:669px;width:92px;height:21px"><span>Average</span><div class="cbtn"><svg width="9" height="5" viewBox="0 0 9 5"><path d="M0 0h9L4.5 5z" fill="#000"/></svg></div></div>
<div class="t" style="left:224.2px;top:650.23px;font-size:14.5px;transform:scaleX(0.897);transform-origin:0 0;">LO F</div>
<div class="r" style="left:227px;top:670px;width:21px;height:20px;background:#5c050b;"></div>
<div class="t" style="left:279.2px;top:650.23px;font-size:14.5px;transform:scaleX(0.897);transform-origin:0 0;">E F</div>
<div class="r" style="left:277px;top:670px;width:21px;height:20px;background:#5c050b;"></div>
<div class="t" style="left:311.7px;top:650.23px;font-size:14.5px;transform:scaleX(0.897);transform-origin:0 0;">MinHold</div>
<div class="r" style="left:327px;top:670px;width:21px;height:20px;background:#5c050b;"></div>
<div class="t" style="left:366.6px;top:650.23px;font-size:14.5px;transform:scaleX(0.897);transform-origin:0 0;">MaxHold</div>
<div class="r" style="left:377px;top:670px;width:21px;height:20px;background:#5c050b;"></div>
<div class="t" style="left:428.8px;top:650.23px;font-size:14.5px;transform:scaleX(0.897);transform-origin:0 0;">PM</div>
<div class="r" style="left:427px;top:670px;width:21px;height:20px;background:#5c050b;"></div>
<div class="t" style="left:458.9px;top:650.23px;font-size:14.5px;transform:scaleX(0.897);transform-origin:0 0;">RWindow</div>
<div class="r" style="left:477px;top:670px;width:21px;height:20px;background:#5c050b;"></div>
<div class="t" style="left:534.2px;top:650.23px;font-size:14.5px;transform:scaleX(0.897);transform-origin:0 0;">Fast-Cycle</div>
<div class="r" style="left:552px;top:670px;width:21px;height:20px;background:#5c050b;"></div>
<div class="t" style="left:616.5px;top:643.23px;font-size:14.5px;transform:scaleX(0.92);transform-origin:0 0;">UpdateTime</div>
<svg class="r" style="left:632.5px;top:660.0px" width="40.0" height="40.0" viewBox="0 0 40.0 40.0"><circle cx="20.5" cy="20.5" r="17.2" fill="#a2a2a2"/><circle cx="18.1" cy="18.1" r="17.4" fill="#f9f9f9"/><circle cx="18.5" cy="18.5" r="15.5" fill="#bdccb6"/><circle cx="21.4" cy="27.7" r="4.9" fill="#808080"/></svg>
<div class="t" style="left:675px;top:663.23px;font-size:14.5px;transform:scaleX(0.897);transform-origin:0 0;">15ms</div>
<div class="r" style="left:3px;top:710px;width:737px;height:72px;border-style:solid;border-width:3px 2px 3px 3px;border-color:#7c7c7c #fdfdfd #fdfdfd #7c7c7c"></div>
<div class="r" style="left:3px;top:710px;width:1px;height:75px;background:#a6a6a6;"></div>
<div class="r" style="left:3px;top:710px;width:740px;height:1px;background:#a6a6a6;"></div>
<div class="r" style="left:6px;top:713px;width:734px;height:69px;border:1px solid #fcfcfc"></div>
<div class="r" style="left:7px;top:714px;width:733px;height:69px;border-style:solid;border-width:1px 1px 1px 2px;border-color:#a4a4a4 #b8b8b8 #b8b8b8 #a4a4a4"></div>
<div class="t" style="left:26.5px;top:722.23px;font-size:14.5px;transform:scaleX(0.94);transform-origin:0 0;">PeakTH</div>
<svg class="r" style="left:30.0px;top:736.0px" width="40.0" height="40.0" viewBox="0 0 40.0 40.0"><circle cx="20.5" cy="20.5" r="17.2" fill="#a2a2a2"/><circle cx="18.1" cy="18.1" r="17.4" fill="#f9f9f9"/><circle cx="18.5" cy="18.5" r="15.5" fill="#bdccb6"/><circle cx="21.4" cy="27.7" r="4.9" fill="#808080"/></svg>
<div class="t" style="left:96.5px;top:724.23px;font-size:14.5px;width:80px;text-align:center;transform:scaleX(0.897);transform-origin:50% 0;">PeakA</div>
<div class="btn" style="left:125px;top:743px;width:21px;height:20px;font-size:14.5px"></div>
<div class="t" style="left:147px;top:724.23px;font-size:14.5px;width:80px;text-align:center;transform:scaleX(0.897);transform-origin:50% 0;">PeakH</div>
<div class="btn" style="left:176px;top:743px;width:21px;height:20px;font-size:14.5px"></div>
<div class="t" style="left:196.5px;top:724.23px;font-size:14.5px;width:80px;text-align:center;transform:scaleX(0.897);transform-origin:50% 0;">Tracker</div>
<div class="btn" style="left:225px;top:743px;width:21px;height:20px;font-size:14.5px"></div>
<div class="t" style="left:246.5px;top:724.23px;font-size:14.5px;width:80px;text-align:center;transform:scaleX(0.897);transform-origin:50% 0;">CF</div>
<div class="btn" style="left:275px;top:743px;width:21px;height:20px;font-size:14.5px"></div>
<div class="t" style="left:297px;top:724.23px;font-size:14.5px;width:80px;text-align:center;transform:scaleX(0.897);transform-origin:50% 0;">Prev</div>
<div class="btn" style="left:326px;top:743px;width:21px;height:20px;font-size:14.5px"></div>
<div class="t" style="left:347px;top:724.23px;font-size:14.5px;width:80px;text-align:center;transform:scaleX(0.897);transform-origin:50% 0;">Next</div>
<div class="btn" style="left:376px;top:743px;width:21px;height:20px;font-size:14.5px"></div>
<div class="t" style="left:396.5px;top:724.23px;font-size:14.5px;width:80px;text-align:center;transform:scaleX(0.897);transform-origin:50% 0;">Del</div>
<div class="btn" style="left:425px;top:743px;width:21px;height:20px;font-size:14.5px"></div>
<div class="t" style="left:446.5px;top:724.23px;font-size:14.5px;width:80px;text-align:center;transform:scaleX(0.897);transform-origin:50% 0;">Set</div>
<div class="btn" style="left:475px;top:743px;width:21px;height:20px;font-size:14.5px"></div>
<div class="t" style="left:516.5px;top:724.23px;font-size:14.5px;transform:scaleX(0.897);transform-origin:0 0;">MKR Unit</div>
<div class="cmb" style="left:516px;top:743px;width:54px;height:20px"><span>kHz</span><div class="cbtn"><svg width="9" height="5" viewBox="0 0 9 5"><path d="M0 0h9L4.5 5z" fill="#000"/></svg></div></div>
<div class="t" style="left:579.8px;top:724.23px;font-size:14.5px;transform:scaleX(0.897);transform-origin:0 0;">All Info</div>
<div class="r" style="left:590px;top:744px;width:21px;height:20px;background:#5c050b;"></div>
<div class="t" style="left:628.9px;top:724.23px;font-size:14.5px;transform:scaleX(0.897);transform-origin:0 0;">Cursors</div>
<div class="r" style="left:642px;top:744px;width:21px;height:20px;background:#5c050b;"></div>
<div class="t" style="left:676.6px;top:724.23px;font-size:14.5px;transform:scaleX(0.897);transform-origin:0 0;">CP/PSD</div>
<div class="r" style="left:692px;top:744px;width:21px;height:20px;background:#5c050b;"></div>
<div class="t bx" style="left:732.2px;top:718.02px;font-size:12.5px;">X</div>
<div class="r" style="left:3px;top:788px;width:737px;height:73px;border-style:solid;border-width:2px 2px 3px 3px;border-color:#7c7c7c #fdfdfd #fdfdfd #7c7c7c"></div>
<div class="r" style="left:3px;top:788px;width:1px;height:75px;background:#a6a6a6;"></div>
<div class="r" style="left:6px;top:790px;width:734px;height:69px;border:1px solid #fcfcfc"></div>
<div class="r" style="left:7px;top:791px;width:733px;height:68px;border-style:solid;border-width:2px 1px 2px 2px;border-color:#a4a4a4 #b8b8b8 #b8b8b8 #a4a4a4"></div>
<div class="r" style="left:26px;top:795px;width:47px;height:16px;background:#b9ccb3;"></div>
<div class="t b u" style="left:26px;top:796.63px;font-size:14.5px;width:47px;text-align:center;transform:scaleX(1.03);transform-origin:50% 0;">Power</div>
<div class="lfr" style="left:28px;top:813px;width:41px;height:38px;background:#fff"></div>
<div class="r" style="left:35px;top:818px;width:31px;height:30px;background:#00d800;"></div>
<div class="t" style="left:85px;top:809.23px;font-size:14.5px;transform:scaleX(0.897);transform-origin:0 0;">°C</div>
<svg class="r" style="left:83px;top:825px" width="16" height="16" viewBox="0 0 16 16"><path d="M8 .8 L10 2 L12.6 2 L13.6 4.2 L15.2 6 L14.6 8.4 L15 10.6 L13 12 L12 14.2 L9.6 14.4 L8 15.4 L6 14.4 L3.8 14.2 L3 12 L1 10.6 L1.4 8.4 L.8 6 L2.4 4.2 L3.4 2 L6 2Z" fill="#007800" stroke="#003800" stroke-width="1"/></svg>
<div class="r" style="left:106px;top:795px;width:61px;height:16px;background:#b9ccb3;"></div>
<div class="t u" style="left:106px;top:796.23px;font-size:14.5px;width:61px;text-align:center;transform:scaleX(0.985);transform-origin:50% 0;">dB/div</div>
<svg class="r" style="left:115.5px;top:814.0px" width="40.0" height="40.0" viewBox="0 0 40.0 40.0"><circle cx="20.5" cy="20.5" r="17.2" fill="#a2a2a2"/><circle cx="18.1" cy="18.1" r="17.4" fill="#f9f9f9"/><circle cx="18.5" cy="18.5" r="15.5" fill="#bdccb6"/><circle cx="14.5" cy="28.0" r="4.9" fill="#808080"/></svg>
<div class="t" style="left:159px;top:819.23px;font-size:14.5px;transform:scaleX(0.897);transform-origin:0 0;">2.5</div>
<div class="t" style="left:159px;top:836.23px;font-size:14.5px;transform:scaleX(0.897);transform-origin:0 0;">dB</div>
<div class="t" style="left:197px;top:802.23px;font-size:14.5px;width:80px;text-align:center;transform:scaleX(0.897);transform-origin:50% 0;">TFinder</div>
<div class="btn" style="left:226px;top:820px;width:21px;height:21px;font-size:14.5px"></div>
<div class="t" style="left:247px;top:802.23px;font-size:14.5px;width:80px;text-align:center;transform:scaleX(0.897);transform-origin:50% 0;">Hold</div>
<div class="r" style="left:277px;top:821px;width:21px;height:20px;background:#5c050b;"></div>
<div class="grp" style="left:311px;top:799px;width:245px;height:53px"></div>
<div class="r" style="left:518px;top:795px;width:32px;height:10px;background:#f0f0f0;"></div>
<div class="t" style="left:521px;top:794.23px;font-size:14.5px;transform:scaleX(0.897);transform-origin:0 0;">TSA</div>
<div class="t" style="left:296px;top:802.23px;font-size:14.5px;width:80px;text-align:center;transform:scaleX(0.897);transform-origin:50% 0;">Copy</div>
<div class="btn" style="left:326px;top:820px;width:21px;height:21px;font-size:14.5px"></div>
<div class="t" style="left:347px;top:802.23px;font-size:14.5px;width:80px;text-align:center;transform:scaleX(0.897);transform-origin:50% 0;">L/C</div>
<div class="r" style="left:377.5px;top:821px;width:21px;height:20px;background:#5c050b;"></div>
<div class="t" style="left:421px;top:802.23px;font-size:14.5px;transform:scaleX(0.897);transform-origin:0 0;">Display Format</div>
<div class="cmb" style="left:424px;top:821px;width:116px;height:20px"><span>Logmag</span><div class="cbtn"><svg width="9" height="5" viewBox="0 0 9 5"><path d="M0 0h9L4.5 5z" fill="#000"/></svg></div></div>
<div class="t" style="left:555.5px;top:804.23px;font-size:14.5px;width:80px;text-align:center;transform:scaleX(0.897);transform-origin:50% 0;">Legend</div>
<div class="btn" style="left:587px;top:823px;width:21px;height:20px;font-size:14.5px"></div>
<div class="t" style="left:609px;top:804.23px;font-size:14.5px;width:80px;text-align:center;transform:scaleX(0.897);transform-origin:50% 0;">Panels</div>
<div class="cb" style="left:639px;top:822px;width:19px;height:19px"></div>
<div class="t" style="left:659.5px;top:804.23px;font-size:14.5px;width:80px;text-align:center;transform:scaleX(0.897);transform-origin:50% 0;">ToolBar</div>
<div class="cb" style="left:689px;top:822px;width:19px;height:19px"></div>
<div class="r" style="left:732px;top:792px;width:9px;height:68px;background:#a9a9a9;"></div>
<div class="t" style="left:732px;top:820.23px;font-size:14.5px;transform:scaleX(0.897);transform-origin:0 0;">&gt;</div>
<div class="r" style="left:2px;top:866px;width:1267px;height:2px;background:#bcbcbc;"></div>
<div class="r" style="left:3px;top:868px;width:1266px;height:1px;background:#e6e6e6;"></div>
<div class="r" style="left:3px;top:869px;width:1266px;height:1px;background:#a8a8a8;"></div>
<div class="r" style="left:2px;top:868px;width:2px;height:64px;background:#c2c2c2;"></div>
<div class="btn" style="left:21px;top:878px;width:72px;height:49px;font-size:14.5px"><span>Edit SA<br>markers</span></div>
<div class="btn" style="left:104px;top:878px;width:72px;height:49px;font-size:14.5px"><span>Edit TSA<br>markers</span></div>
<div class="btn" style="left:186px;top:878px;width:72px;height:49px;font-size:14.5px"><span>TSA/SWE<br>1st</span></div>
<div class="btn" style="left:269px;top:878px;width:72px;height:49px;font-size:14.5px"><span>TSA/SWE<br>3rd</span></div>
<div class="btn" style="left:351px;top:878px;width:72px;height:49px;font-size:14.5px"><span>TSA/SWE<br>5th</span></div>
<div class="btn" style="left:434px;top:878px;width:72px;height:49px;font-size:14.5px"><span>TSA<br>RXOffset</span></div>
<div class="btn" style="left:516px;top:878px;width:72px;height:49px;font-size:14.5px"><span>TSA<br>TXOffset</span></div>
<div class="btn" style="left:599px;top:878px;width:72px;height:49px;font-size:14.5px"><span>TSA<br>Multipl.</span></div>
<div class="btn" style="left:681px;top:878px;width:72px;height:49px;font-size:14.5px"><span>Open<br>TSA scan</span></div>
<div class="btn" style="left:763px;top:878px;width:72px;height:49px;font-size:14.5px"><span>Save<br>TSA scan</span></div>
<div class="btn" style="left:846px;top:878px;width:72px;height:49px;font-size:14.5px"><span>Save<br>JPG/BMP</span></div>
<div class="btn" style="left:928px;top:878px;width:72px;height:49px;font-size:14.5px"><span style="top:0.5px">Trace Log</span></div>
<div class="btn" style="left:1011px;top:878px;width:72px;height:49px;font-size:14.5px"><span style="top:0.5px">Settings</span></div>
<div class="btn" style="left:1102px;top:878px;width:72px;height:49px;font-size:14.5px"><span style="top:0.5px">About</span></div>
<div class="btn" style="left:1184px;top:878px;width:72px;height:49px;font-size:14.5px"><span style="top:0.5px">Next&gt;&gt;&gt;</span></div>
</body></html>
